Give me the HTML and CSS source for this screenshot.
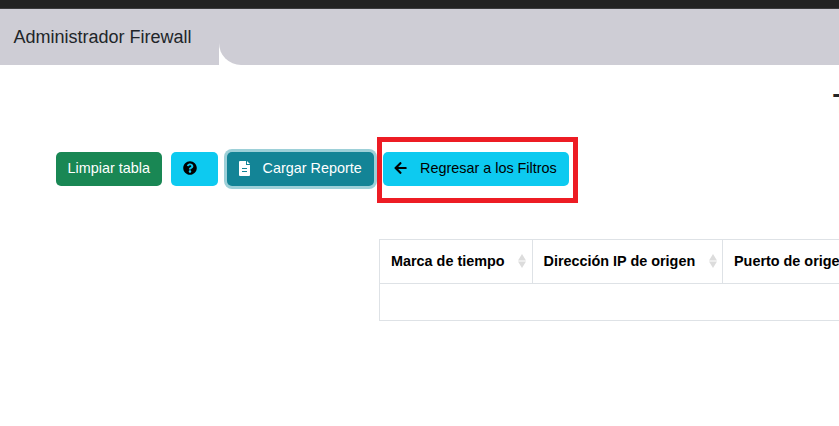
FILE: index.html
```html
<!DOCTYPE html>
<html lang="es">
<head>
<meta charset="utf-8">
<title>Administrador Firewall</title>
<link rel="stylesheet" href="styles.css">
</head>
<body>
<div class="topbar"></div>
<header class="header">
  <div class="brand">Administrador Firewall</div>
  <div class="nav"></div>
</header>
<main>
  <h1 class="title">T</h1>
  <div class="toolbar">
    <button class="btn success">Limpiar tabla</button>
    <button class="btn info help" aria-label="Ayuda">
      <svg width="14" height="14" viewBox="0 0 512 512"><path d="M504 256c0 137-111 248-248 248S8 393 8 256 119 8 256 8s248 111 248 248zM262.700 90c-54.500 0-89.300 23-116.500 63.800-3.500 5.300-2.400 12.400 2.700 16.300l34.700 26.300c5.200 3.900 12.600 3 16.700-2.100 17.900-22.700 30.100-35.800 57.300-35.800 20.400 0 45.700 13.100 45.700 33 0 15-12.400 22.700-32.500 34C247.100 238.500 216 254.900 216 296v4c0 6.600 5.400 12 12 12h56c6.600 0 12-5.400 12-12v-1.300c0-28.500 83.200-29.600 83.200-106.700 0-58-60.200-102-116.500-102zM256 338c-25.400 0-46 20.600-46 46s20.600 46 46 46 46-20.600 46-46-20.600-46-46-46z"/></svg>
    </button>
    <button class="btn report">
      <svg width="11" height="15" viewBox="0 0 11 15"><path fill-rule="evenodd" d="M1 0h6v4h4v10a1 1 0 0 1-1 1H1a1 1 0 0 1-1-1V1a1 1 0 0 1 1-1zM3 7v1h5V7zM3 10v1h5v-1zM8 0l3 3H8z"/></svg>
      <span>Cargar Reporte</span>
    </button>
    <div class="highlight">
      <button class="btn info back">
        <svg width="13" height="14" viewBox="0 0 448 512"><path d="M257.500 445.100l-22.200 22.200c-9.400 9.400-24.600 9.400-33.900 0L7 273c-9.400-9.400-9.400-24.600 0-33.900L201.400 44.700c9.400-9.400 24.600-9.400 33.900 0l22.200 22.200c9.500 9.500 9.300 25-.4 34.300L136.600 216H424c13.300 0 24 10.700 24 24v32c0 13.300-10.700 24-24 24H136.600l120.500 114.800c9.800 9.300 10 24.800.4 34.300z"/></svg>
        <span>Regresar a los Filtros</span>
      </button>
    </div>
  </div>
  <div class="table">
    <div class="row head">
      <div class="cell c1"><span>Marca de tiempo</span><svg class="sort" width="8" height="14" viewBox="0 0 8 14"><path d="M4 0l4 6.500H0zM0 7.500h8l-4 6.500z"/></svg></div>
      <div class="cell c2"><span>Dirección IP de origen</span><svg class="sort" width="8" height="14" viewBox="0 0 8 14"><path d="M4 0l4 6.500H0zM0 7.500h8l-4 6.500z"/></svg></div>
      <div class="cell c3"><span>Puerto de origen</span></div>
    </div>
    <div class="row empty"></div>
  </div>
</main>
</body>
</html>
```
FILE: styles.css
```css
* { box-sizing: border-box; }
html, body { height: 100%; overflow: hidden; }
body {
  margin: 0;
  background: #fff;
  color: #212529;
  font-family: "Liberation Sans", Arial, sans-serif;
  font-size: 14.4px;
}
main { overflow: hidden; }
.topbar { height: 9px; background: #222; border-bottom: 1px solid #3b3b3d; }
.header { display: flex; height: 56px; background: #fff; }
.brand {
  width: 219px;
  padding-left: 13.5px;
  background: #cecdd5;
  font-size: 18px;
  line-height: 56px;
  white-space: nowrap;
}
.nav { flex: 1; background: #cecdd5; border-bottom-left-radius: 22px; }
.title {
  margin: 0 0 0 833px;
  height: 72px;
  padding-top: 22px;
  font-size: 28px;
  font-weight: 700;
  line-height: 34px;
}
.toolbar { display: flex; align-items: flex-start; height: 66px; padding-left: 56px; }
.btn {
  display: flex;
  align-items: center;
  height: 34px;
  margin: 15px 0 0;
  padding: 0 0 2px 12px;
  border: 0;
  border-radius: 5px;
  color: #000;
  font: 14.4px "Liberation Sans", Arial, sans-serif;
  white-space: nowrap;
}
.btn svg { fill: currentColor; }
.success { width: 106px; padding-left: 11.5px; background: #198754; color: #fff; }
.info { background: #0dcaf0; }
.help { width: 47px; margin-left: 9px; }
.report {
  width: 147px;
  margin-left: 9px;
  gap: 12.5px;
  background: #138496;
  color: #fff;
  box-shadow: 0 0 0 3px #9dd0d8;
}
.highlight {
  width: 201px;
  height: 66px;
  margin-left: 3px;
  border: 5px solid #ed1c24;
}
.back { width: 186px; margin: 10px 0 0 1px; padding-left: 11px; gap: 13px; }
.table {
  width: 700px;
  margin: 36px 0 0 379px;
  border: 1px solid #dee2e6;
}
.row { display: flex; }
.head { height: 44px; border-bottom: 1px solid #dee2e6; }
.cell {
  display: flex;
  flex: none;
  align-items: center;
  justify-content: space-between;
  padding: 0 6px 1px 11px;
  border-right: 1px solid #dee2e6;
  color: #000;
  font-weight: 700;
  white-space: nowrap;
}
.c1 { width: 153px; }
.c2 { width: 190px; padding-right: 5px; padding-left: 10.5px; }
.c3 { width: 160px; }
.sort { fill: #dcdcdc; }
.empty { height: 36px; }
```
